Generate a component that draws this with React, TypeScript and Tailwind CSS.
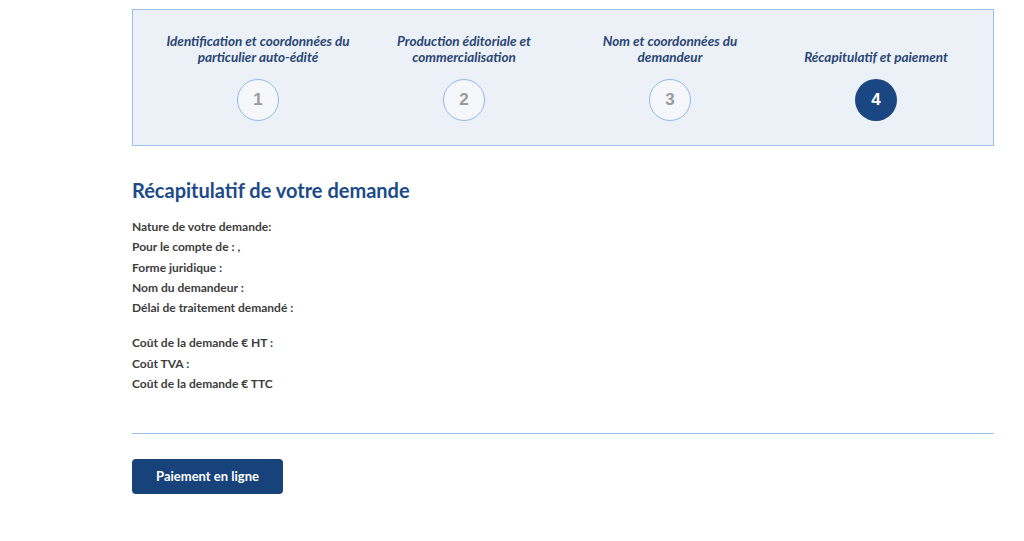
import React from 'react';

const steps = [
  { label: 'Identification et coordonnées du particulier auto-édité', n: 1 },
  { label: 'Production éditoriale et commercialisation', n: 2 },
  { label: 'Nom et coordonnées du demandeur', n: 3 },
  { label: 'Récapitulatif et paiement', n: 4 },
];

const activeStep = 4;

export default function App() {
  return (
    <div className="min-h-[541px] bg-white font-['Lato','Liberation_Sans',sans-serif]">
      <div className="ml-[132px] w-[862px] pt-[9px]">
        {/* Stepper */}
        <div className="h-[137px] border border-[#9cc0ee] bg-[#ecf1f8] pl-[22px] pr-[14px]">
          <div className="grid grid-cols-4">
            {steps.map((s) => (
              <div key={s.n} className="flex flex-col items-center">
                <div className="flex h-[56px] items-end justify-center pb-[1px]">
                  <p className="max-w-[190px] text-center text-[13.5px] font-bold italic leading-[16px] text-[#2a4573]">
                    {s.label}
                  </p>
                </div>
                <div
                  className={
                    s.n === activeStep
                      ? "mt-[13px] flex h-[42px] w-[42px] items-center justify-center rounded-full bg-[#1a4782] font-['Liberation_Sans',sans-serif] text-[17px] font-bold text-white"
                      : "mt-[13px] flex h-[42px] w-[42px] items-center justify-center rounded-full border border-[#8fb8ee] bg-[#f5f7fa] font-['Liberation_Sans',sans-serif] text-[17px] font-bold text-[#9a9a9a]"
                  }
                >
                  {s.n}
                </div>
              </div>
            ))}
          </div>
        </div>

        {/* Summary */}
        <h2 className="mt-[31px] text-[20px] font-bold leading-[26px] text-[#1c4b88]">
          Récapitulatif de votre demande
        </h2>
        <div className="mt-[14px] h-[178px] text-[12px] font-bold leading-[20.3px] text-[#3d3d3d]">
          <p>Nature de votre demande:</p>
          <p>Pour le compte de : ,</p>
          <p>Forme juridique :</p>
          <p>Nom du demandeur :</p>
          <p>Délai de traitement demandé :</p>
          <div className="h-[15px]" />
          <p>Coût de la demande € HT :</p>
          <p>Coût TVA :</p>
          <p>Coût de la demande € TTC</p>
        </div>

        <div className="mt-[38px] h-px bg-[#9dbfec]" />

        <button className="mt-[25px] h-[35px] w-[151px] rounded-[4px] bg-[#17427a] text-[13px] font-bold text-white">
          Paiement en ligne
        </button>
      </div>
    </div>
  );
}
